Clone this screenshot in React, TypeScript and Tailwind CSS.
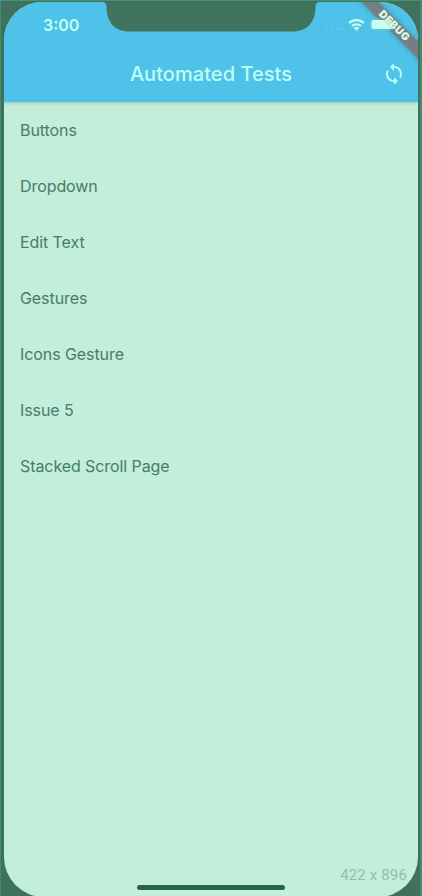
import React from "react";
import { MdSync } from "react-icons/md";

const items = ["Buttons", "Dropdown", "Edit Text", "Gestures", "Icons Gesture", "Issue 5", "Stacked Scroll Page"];

function StatusBar() {
  return (
    <div className="relative z-40 flex h-[44px] items-start justify-between pl-[39px] pr-[22px] text-[#c5fff3]">
      <span className="mt-[12px] text-[16px] font-semibold leading-[22px]">3:00</span>
      <div className="mt-[16px] flex h-[13px] items-center">
        <div className="mr-[5px] mt-[9px] flex gap-[3px]">
          {[0, 1, 2, 3].map((i) => (
            <span key={i} className="h-[2px] w-[2px] rounded-full bg-[#6bcde9]" />
          ))}
        </div>
        <svg width="17" height="13" viewBox="0 0 17 13" fill="none" stroke="currentColor" strokeWidth="2.1" className="mr-[5px]">
          <path d="M1.2 5.1a10.4 10.4 0 0 1 14.6 0" />
          <path d="M3.9 8.1a6.5 6.5 0 0 1 9.2 0" />
          <path d="M8.5 12.7 5.8 10a3.9 3.9 0 0 1 5.4 0z" fill="currentColor" stroke="none" />
        </svg>
        <svg width="26" height="13" viewBox="0 0 26 13">
          <rect x="0.5" y="1" width="23" height="11" rx="3" fill="none" stroke="#82cfcb" strokeOpacity="0.6" />
          <rect x="1.5" y="2" width="21" height="9" rx="2" fill="#cafff0" />
        </svg>
      </div>
    </div>
  );
}

export default function App() {
  return (
    <div className="relative h-[896px] w-[422px] overflow-hidden border-t border-[#479275] bg-[#3f725d] pt-px font-['Inter',sans-serif]">
      <div className="absolute inset-y-0 left-0 w-px bg-[#438a70]" />
      <div className="absolute inset-y-0 right-0 w-[2px] bg-[#438a70]" />
      <main className="relative mx-[4px] flex h-[895px] flex-col overflow-hidden rounded-t-[38px] rounded-b-[40px] bg-[#c2eedb]">
        <header className="relative h-[100px] shrink-0 bg-[#4ec2e8] shadow-[0_0_4px_rgba(20,80,70,0.4)]">
          <StatusBar />
          <div className="flex h-[56px] items-center pl-[48px] text-[#bcfff5]">
            <h1 className="flex-1 text-center text-[20px] font-medium leading-[24px] tracking-[0.05px]">Automated Tests</h1>
            <button className="flex w-[48px] items-center justify-center" aria-label="Refresh">
              <MdSync size={24} />
            </button>
          </div>
        </header>
        <ul>
          {items.map((item) => (
            <li key={item} className="flex h-[56px] items-center pl-[16px] text-[16px] leading-[24px] tracking-[-0.08px] text-[#487c67]">
              {item}
            </li>
          ))}
        </ul>
        <svg className="absolute left-[98px] top-0 z-20" width="218" height="30" viewBox="0 0 218 30">
          <path d="M0 0H218Q213.500 0 213.500 5C213.500 20 205 29.500 191 29.500H27C13 29.500 4.500 20 4.500 5Q4.500 0 0 0Z" fill="#41745f" />
        </svg>
        <div className="absolute right-[-50px] top-[22px] z-30 h-[12px] w-[140px] rotate-45 bg-[#7b7778]/90 shadow-[0_0_5px_rgba(60,70,80,0.4)]" />
        <div className="absolute right-[-50px] top-[22px] z-50 flex h-[12px] w-[140px] rotate-45 items-center justify-center pr-[11px] text-[10.5px] font-black leading-[12px] tracking-[0.5px] text-[#d6ffe8] [text-shadow:0_0_1px_#7b8a80]">
          DEBUG
        </div>
        <div className="absolute bottom-[7px] left-[133px] h-[5px] w-[148px] rounded-full bg-[#276548]" />
        <div className="absolute bottom-[12px] right-[11px] font-['Roboto',sans-serif] text-[15px] leading-[20px] tracking-[0.15px] text-[#94bfae]">422 x 896</div>
      </main>
    </div>
  );
}
